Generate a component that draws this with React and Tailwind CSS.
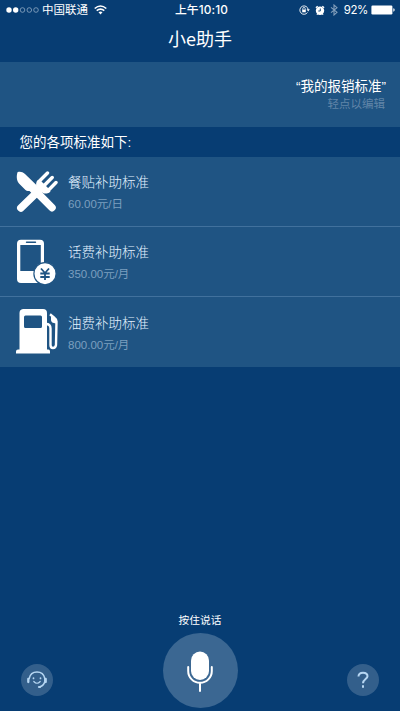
import React from "react";

function Cutlery() {
  return (
    <svg width="42" height="42" viewBox="0 0 42 42" fill="#fff" stroke="#fff" strokeLinecap="round">
      <path d="M1.500 1.300C.3 5 .5 9.500 3 12.500L9.500 19c1.500 1.200 3 1 4 1.100l4 4 6.500-6.500L9 3C6.500 1 4 .3 1.500 1.300Z" stroke="none" />
      <path d="M19 19.500 36 36.700" strokeWidth="7.500" />
      <path d="M26 16.500 4.800 37" strokeWidth="7.500" />
      <path d="M21.500 9.500c-1.800 2-1.800 5-.5 7.500l6 5c2.500 1.200 5.500.5 7.500-1.500l-2.500-3.500-7-7Z" stroke="none" />
      <path d="M22.500 11 31.500 2M27.200 15.500 36.200 6.500M31.700 20 40 11.500" strokeWidth="3.400" />
    </svg>
  );
}

function PhoneBill() {
  return (
    <svg width="42" height="46" viewBox="0 0 42 46">
      <path fill="#fff" fillRule="evenodd" d="M5 .8h19a4 4 0 0 1 4 4V40a4 4 0 0 1-4 4H5a4 4 0 0 1-4-4V4.800a4 4 0 0 1 4-4ZM4.300 6v26h20.500V6Z" />
      <path d="M10.500 3.300h9" stroke="#1f5483" strokeWidth="1.400" strokeLinecap="round" />
      <circle cx="29" cy="34.700" r="11.100" fill="#fff" stroke="#1f5483" strokeWidth="1.200" />
      <path d="m25 29.500 4 4.500 4-4.500M29 34v7M24.300 34.500h9.400M24.300 38h9.400" fill="none" stroke="#1f5483" strokeWidth="1.800" />
    </svg>
  );
}

function FuelPump() {
  return (
    <svg width="43" height="46" viewBox="0 0 43 46">
      <path fill="#fff" fillRule="evenodd" d="M7 0h20a4 4 0 0 1 4 4v36.500h1.500q1.500 0 1.500 2V44.500H0v-2q0-2 2-2h1.500V4A4 4 0 0 1 7 0Zm2.500 6.500a1.500 1.500 0 0 0-1.500 1.500v9.500q0 1.500 1.500 1.500h15q1.500 0 1.500-1.500V8q0-1.500-1.500-1.500Z" />
      <path d="M30 15q4.500 0 4.500 4.500v16.500q0 3 2.500 3t3-3L40.500 12.500q0-2-2-3.500L34 5.300" fill="none" stroke="#fff" strokeWidth="2.400" />
      <path d="M35 7.500v3.500q0 3 5 3.500v-5Z" fill="#fff" />
    </svg>
  );
}

function StatusBar() {
  return (
    <header className="grid h-5 grid-cols-[1fr_auto_1fr] items-center pr-[5px] pl-[6px] font-[Inter,'Noto_Sans_CJK_SC',sans-serif] text-[11.500px] leading-5 text-white">
      <div className="flex items-center">
        <svg width="34" height="8" viewBox="0 0 34 8" fill="none">
          <circle cx="3" cy="4" r="2.700" fill="#fff" />
          <circle cx="9.700" cy="4" r="2.700" fill="#fff" />
          <g stroke="#8fa9c4" strokeWidth=".8">
            <circle cx="16.500" cy="4" r="2.300" /><circle cx="23.300" cy="4" r="2.300" /><circle cx="30" cy="4" r="2.300" />
          </g>
        </svg>
        <span className="ml-[2px] whitespace-nowrap">中国联通</span>
        <svg className="ml-[6px]" width="13" height="10" viewBox="0 0 13 10" fill="none" stroke="#fff" strokeWidth="1.600">
          <path d="M.7 3.500Q6.500-1.500 12.300 3.500M2.700 5.700q3.800-3.300 7.600 0" />
          <path d="M4.500 7.300q2-1.500 4 0l-2 2.200Z" fill="#fff" stroke="none" />
        </svg>
      </div>
      <span className="pl-[2px] text-[11.800px] font-medium tracking-[0.15px] whitespace-nowrap">上午10:10</span>
      <div className="flex items-center justify-end">
        <svg width="11" height="10" viewBox="0 0 11 10" fill="none" stroke="#fff">
          <path d="M8.500 7.500A4.200 4.200 0 1 1 9.200 4.500" strokeWidth=".9" />
          <path d="M7.600 4.300h3.200L9.200 6.500Z" fill="#fff" stroke="none" />
          <path d="M3.200 4.600h3.600v2.700H3.200Z" fill="#fff" stroke="none" />
          <path d="M3.800 4.800V3.500q0-1 1.200-1t1.200 1v1.300" strokeWidth=".8" />
        </svg>
        <svg className="ml-[5px]" width="10" height="11" viewBox="0 0 10 11">
          <circle cx="5" cy="5.800" r="4.200" fill="#fff" />
          <path d="M.9 2.700 2.700 1.200M7.300 1.200l1.800 1.500" stroke="#fff" strokeWidth="1.400" />
          <path d="M2.500 9 2 10M7.500 9l.5 1" stroke="#fff" strokeWidth="1" />
          <path d="M5.300 3.500V6H3.300" fill="none" stroke="#073d73" strokeWidth=".9" />
        </svg>
        <svg className="ml-[5px]" width="8" height="12" viewBox="0 0 8 12" fill="none" stroke="#839fbb" strokeWidth="1.100">
          <path d="m1 3.300 6 5L4 11V1l3 2.700-6 5" />
        </svg>
        <span className="ml-[6px] tracking-[-0.4px]">92%</span>
        <svg className="ml-[3px]" width="24" height="10" viewBox="0 0 24 10" fill="#fff">
          <rect x=".4" y=".6" width="21" height="8.800" rx="1.200" />
          <path d="M22.300 3.300q1.400.3 1.400 1.700t-1.400 1.700Z" />
        </svg>
      </div>
    </header>
  );
}

const allowances = [
  { name: "餐贴补助标准", amount: "60.00元/日", Icon: Cutlery },
  { name: "话费补助标准", amount: "350.00元/月", Icon: PhoneBill },
  { name: "油费补助标准", amount: "800.00元/月", Icon: FuelPump },
];

export default function App() {
  return (
    <div className="flex h-[711px] w-[400px] flex-col overflow-hidden bg-[#073d73] font-['Liberation_Sans','Noto_Sans_CJK_SC',sans-serif] text-white">
      <StatusBar />
      <h1 className="flex h-[42px] items-center justify-center pb-[6px] font-['Noto_Sans_CJK_SC',sans-serif] text-[18px] font-normal">小e助手</h1>
      <section className="flex h-[65px] flex-col items-end justify-center bg-[#1f5483] pr-[14px]">
        <p className="text-[13.500px] leading-[19px]">“我的报销标准”</p>
        <p className="pr-px text-[11.500px] leading-[17px] text-[#6185a8]">轻点以编辑</p>
      </section>
      <h2 className="flex h-[30px] items-center pt-[2px] pl-[19.500px] text-[13.500px] font-normal">您的各项标准如下:</h2>
      <ul className="divide-y divide-[#41719d] bg-[#1f5483]">
        {allowances.map(({ name, amount, Icon }) => (
          <li key={name} className="flex h-[70px] items-center pl-4">
            <div className="flex w-[52px] shrink-0"><Icon /></div>
            <div>
              <p className="font-['Noto_Sans_CJK_SC',sans-serif] text-[13.500px] leading-[22px] font-light text-[#e2f1ff]">{name}</p>
              <p className="mt-[3px] text-[11.500px] leading-[18px] text-[#7c9fbf]">{amount}</p>
            </div>
          </li>
        ))}
      </ul>
      <footer className="mt-auto flex h-[99px] items-start justify-between pr-[21px] pl-[21px]">
        <button className="mt-[52px] flex size-8 items-center justify-center rounded-full bg-[#335f8b]">
          <svg width="22" height="20" viewBox="0 0 22 20" fill="none" stroke="#b6d6f2" strokeLinecap="round">
            <path d="M3.200 8.500Q4.500 2 11 2t7.800 6.500v3q-1 4-4.800 5.200" strokeWidth="1.500" />
            <path d="M2.300 9v3M19.700 9v3" strokeWidth="2.300" />
            <path d="M7.800 11.500q3.200 3.500 6.400 0" strokeWidth="1.200" />
            <path d="M7.500 8v.5M14.500 8v.5" strokeWidth="1.700" />
            <path d="M13 17h1" strokeWidth="2.200" />
          </svg>
        </button>
        <div className="flex flex-col items-center">
          <span className="text-[10.700px] leading-[16px]">按住说话</span>
          <button className="mt-[5px] flex size-[75px] items-center justify-center rounded-full bg-[#3b6792]">
            <svg className="mt-[2px]" width="26" height="42" viewBox="0 0 26 42" fill="none" stroke="#fff" strokeLinecap="round">
              <rect x="4" y=".5" width="18" height="28.500" rx="9" fill="#fff" stroke="none" />
              <path d="M1.200 16v4a11.800 11.800 0 0 0 23.600 0v-4M13 32v8" strokeWidth="2" />
            </svg>
          </button>
        </div>
        <button className="mt-[52px] flex size-8 items-center justify-center rounded-full bg-[#335f8b]">
          <svg width="12" height="18" viewBox="0 0 12 18" fill="none" stroke="#b6d6f2" strokeWidth="2">
            <path d="M1.500 5.500Q1.500 1.700 6 1.700t4.500 3.600C10.500 8 6 8.300 6 12.300M6 14.300v2.400" />
          </svg>
        </button>
      </footer>
    </div>
  );
}
